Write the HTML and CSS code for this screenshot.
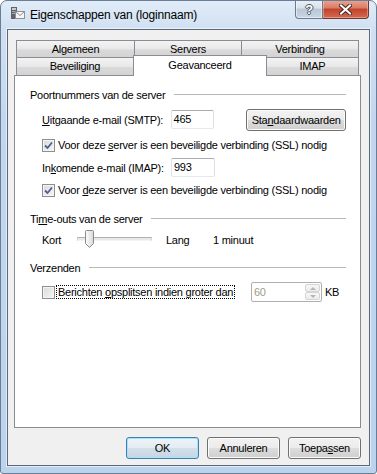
FILE: index.html
```html
<!DOCTYPE html>
<html lang="nl">
<head>
    <meta charset="UTF-8">
    <title>Eigenschappen van (loginnaam)</title>
    <link rel="stylesheet" href="styles.css">
</head>
<body>
    <div class="window">
        <!-- Title bar -->
        <div class="titlebar">
            <svg class="app-icon" width="16" height="14" viewBox="0 0 16 14">
                <rect x="1" y="1" width="6" height="12" fill="#5e6369"/>
                <rect x="2" y="2" width="4" height="2" fill="#c7cbd0"/>
                <rect x="2" y="5" width="4" height="1" fill="#a9aeb4"/>
                <rect x="2" y="7" width="4" height="1" fill="#a9aeb4"/>
                <rect x="5.5" y="5.5" width="9" height="7" fill="#f6f6f6" stroke="#8c9198"/>
                <path d="M6 6 L10 9.5 L14 6" fill="none" stroke="#8c9198"/>
            </svg>
            <span class="title">Eigenschappen van (loginnaam)</span>
            <div class="caption-buttons">
                <div class="cap-help">?</div>
                <div class="cap-close">
                    <svg width="13" height="11" viewBox="0 0 13 11">
                        <path d="M2 1.5 L11 9.5 M11 1.5 L2 9.5" stroke="#4a2a24" stroke-width="4" stroke-linecap="square"/>
                        <path d="M2 1.5 L11 9.5 M11 1.5 L2 9.5" stroke="#fff" stroke-width="2" stroke-linecap="square"/>
                    </svg>
                </div>
            </div>
        </div>

        <div class="client">
            <!-- Tabs -->
            <div class="tabs">
                <div class="tab-row row-back">
                    <div class="tab tab-algemeen">Algemeen</div>
                    <div class="tab tab-servers">Servers</div>
                    <div class="tab tab-verbinding">Verbinding</div>
                </div>
                <div class="tab-row row-front">
                    <div class="tab tab-beveiliging">Beveiliging</div>
                    <div class="tab tab-selected">Geavanceerd</div>
                    <div class="tab tab-imap">IMAP</div>
                </div>
            </div>

            <!-- Tab page -->
            <div class="panel">
                <div class="group-head">Poortnummers van de server</div>

                <div class="row smtp-row">
                    <span class="field-label"><u>U</u>itgaande e-mail (SMTP):</span>
                    <div class="text-input">465</div>
                    <button class="btn btn-std">Sta<u>n</u>daardwaarden</button>
                </div>
                <div class="row check-row first-check">
                    <span class="check checked">
                        <svg width="9" height="9" viewBox="0 0 9 9"><path d="M1 4.5 L3.5 7 L8 1.5" fill="none" stroke="#4c5f8e" stroke-width="1.8"/></svg>
                    </span>
                    <span>Voor deze <u>s</u>erver is een beveiligde verbinding (SSL) nodig</span>
                </div>

                <div class="row imap-row">
                    <span class="field-label">In<u>k</u>omende e-mail (IMAP):</span>
                    <div class="text-input">993</div>
                </div>
                <div class="row check-row">
                    <span class="check checked">
                        <svg width="9" height="9" viewBox="0 0 9 9"><path d="M1 4.5 L3.5 7 L8 1.5" fill="none" stroke="#4c5f8e" stroke-width="1.8"/></svg>
                    </span>
                    <span>Voor <u>d</u>eze server is een beveiligde verbinding (SSL) nodig</span>
                </div>

                <div class="group-head head-timeouts">Ti<u>m</u>e-outs van de server</div>
                <div class="row slider-row">
                    <span class="kort">Kort</span>
                    <div class="slider">
                        <div class="track"></div>
                        <svg class="thumb" width="9" height="18" viewBox="0 0 9 18">
                            <defs>
                                <linearGradient id="thumbfill" x1="0" x2="1" y1="0" y2="0">
                                    <stop offset="0" stop-color="#fdfdfd"/>
                                    <stop offset="1" stop-color="#d8d8d8"/>
                                </linearGradient>
                            </defs>
                            <path d="M1.5 0.5 H7.5 Q8.5 0.5 8.5 1.5 V13.5 L4.5 17.5 L0.5 13.5 V1.5 Q0.5 0.5 1.5 0.5 Z" fill="url(#thumbfill)" stroke="#8a8a8a"/>
                        </svg>
                    </div>
                    <span class="lang">Lang</span>
                    <span>1 minuut</span>
                </div>

                <div class="group-head head-verzenden">Verzenden</div>
                <div class="row split-row">
                    <div class="split-wrap">
                        <span class="check"></span>
                        <span class="focus-label">Berichten <u>o</u>psplitsen indien groter dan</span>
                    </div>
                    <div class="spin">
                        <span class="spin-value">60</span>
                        <div class="spin-buttons">
                            <div class="spin-btn"><span class="arrow-up"></span></div>
                            <div class="spin-btn"><span class="arrow-down"></span></div>
                        </div>
                    </div>
                    <span class="kb">KB</span>
                </div>
            </div>

            <!-- Dialog buttons -->
            <div class="dialog-buttons">
                <button class="btn btn-default">OK</button>
                <button class="btn">Annuleren</button>
                <button class="btn">Toepa<u>s</u>sen</button>
            </div>
        </div>
    </div>
</body>
</html>
```

FILE: styles.css
```css
* { box-sizing: border-box; }
body {
    margin: 0;
    font-family: "Liberation Sans", Arial, sans-serif;
    font-size: 11px;
    letter-spacing: -0.25px;
    color: #000;
    background: #fff;
}
u { text-decoration: underline; text-underline-offset: 1px; }

/* Aero frame */
.window {
    width: 377px;
    height: 474px;
    display: flex;
    flex-direction: column;
    background: linear-gradient(#e1ecf8, #d0e0f2 29px, #c2d7ee 120px, #bcd3ec);
    border: 1px solid #6a7d96;
    border-radius: 7px 7px 3px 3px;
    overflow: hidden;
}
.titlebar {
    height: 28px;
    display: flex;
    align-items: center;
    flex-shrink: 0;
}
.app-icon {
    align-self: flex-start;
    margin: 5px 0 0 9px;
}
.title {
    margin-left: 4px;
    font-size: 12px;
    letter-spacing: -0.17px;
    color: #000;
}
.caption-buttons {
    display: flex;
    align-self: flex-start;
    margin: -1px 7px 0 auto;
    height: 19px;
}
.cap-help, .cap-close {
    display: flex;
    align-items: center;
    justify-content: center;
    height: 19px;
    border: 1px solid #6b7a8f;
    border-top: none;
}
.cap-help {
    width: 28px;
    border-radius: 0 0 0 4px;
    background: linear-gradient(#e9eff6, #d9e2ec 45%, #b8c6d6 50%, #c9d6e4);
    box-shadow: inset 0 0 0 1px rgba(255,255,255,0.5);
    color: #fff;
    font-weight: bold;
    font-size: 13px;
    text-shadow: 1px 0 0 #4d5561, -1px 0 0 #4d5561, 0 1px 0 #4d5561, 0 -1px 0 #4d5561;
}
.cap-close {
    width: 46px;
    border-left: none;
    border-color: #6d3a33;
    border-radius: 0 0 4px 0;
    background: linear-gradient(#e8a795, #d97b63 45%, #c2412a 50%, #d36a4f);
    box-shadow: inset 0 0 0 1px rgba(255,220,210,0.4);
}

/* Client area */
.client {
    flex: 1;
    margin: 0 6px 7px 6px;
    padding: 0 8px 0 6px;
    background: #f0f0f0;
    border: 1px solid #5c6878;
    box-shadow: 0 0 0 1px rgba(255,255,255,0.55);
    display: flex;
    flex-direction: column;
}

/* Tabs */
.tabs {
    margin: 10px 0 0 2px;
}
.tab-row {
    display: flex;
    align-items: flex-start;
}
.row-back { height: 17px; }
.row-front { height: 18px; }
.tab {
    border: 1px solid #898c95;
    border-bottom: none;
    background: linear-gradient(#f3f3f3, #e8e8e8 50%, #dadada 55%, #d3d3d3);
    text-align: center;
    line-height: 16px;
}
.row-back .tab { height: 17px; }
.row-front .tab { height: 18px; line-height: 17px; }
.tab-algemeen { width: 119px; }
.tab-servers { width: 108px; margin-left: -1px; }
.tab-verbinding { width: 118px; margin-left: -1px; }
.tab-beveiliging { width: 118px; }
.row-front .tab-selected {
    position: relative;
    z-index: 1;
    width: 134px;
    height: 21px;
    margin: -2px 0 0 -1px;
    padding-top: 1px;
    line-height: 16px;
    background: #fff;
}
.tab-imap { width: 93px; margin-left: -1px; }

/* Tab page */
.panel {
    width: 347px;
    height: 353px;
    background: #fff;
    border: 1px solid #898c95;
    padding: 11px 14px 0 15px;
    display: flex;
    flex-direction: column;
    flex-shrink: 0;
}
.group-head {
    display: flex;
    align-items: center;
    height: 16px;
}
.group-head::after {
    content: "";
    flex: 1;
    height: 1px;
    margin: -2px 0 0 9px;
    background: #b7b7b7;
}
.head-timeouts { margin-top: 13px; }
.head-verzenden { margin-top: 10px; }

.row {
    display: flex;
    align-items: center;
    padding-left: 12px;
}
.smtp-row { margin-top: 5px; height: 23px; }
.imap-row { margin-top: 4px; height: 21px; }
.check-row { margin-top: 4px; height: 16px; }
.first-check { margin-top: 6px; }
.slider-row { margin-top: 3px; height: 20px; }
.split-row { margin-top: 5px; height: 22px; }

.field-label { width: 129px; }
.text-input {
    width: 44px;
    height: 19px;
    padding-left: 2px;
    line-height: 17px;
    background: #fff;
    border: 1px solid;
    border-color: #abadb3 #dbdfe6 #e3e9ef #e2e3ea;
    border-radius: 2px;
}

.check {
    width: 13px;
    height: 13px;
    margin-right: 3px;
    display: flex;
    align-items: center;
    justify-content: center;
    flex-shrink: 0;
    border: 1px solid #8e8f8f;
    background: linear-gradient(135deg, #d9d9d9, #f7f7f7);
    box-shadow: inset 0 0 0 1px #f4f4f4;
}

/* Slider */
.kort { width: 35px; }
.slider {
    width: 75px;
    height: 20px;
    position: relative;
    display: flex;
    align-items: flex-start;
}
.track {
    flex: 1;
    height: 4px;
    margin-top: 7px;
    background: #e7eaea;
    border: 1px solid;
    border-color: #b0b0b0 #d6d6d6 #f4f4f4 #d6d6d6;
}
.thumb {
    position: absolute;
    left: 8px;
    top: 0;
}
.lang { width: 47px; margin-left: 14px; }

/* Split messages */
.split-wrap {
    width: 209px;
    display: flex;
    align-items: center;
}
.split-wrap .check { margin-right: 1px; }
.focus-label {
    border: 1px dotted #000;
    padding: 0 1px;
    line-height: 12px;
}
.spin {
    width: 71px;
    height: 20px;
    display: flex;
    background: #fff;
    border: 1px solid #afafaf;
    border-radius: 2px;
}
.spin-value {
    flex: 1;
    padding-left: 2px;
    line-height: 18px;
    color: #a39a8c;
}
.spin-buttons {
    width: 15px;
    margin: 1px 1px 1px 0;
    display: flex;
    flex-direction: column;
}
.spin-btn {
    flex: 1;
    display: flex;
    align-items: center;
    justify-content: center;
    border: 1px solid #d5d5d5;
    border-radius: 2px;
    background: linear-gradient(#f7f7f7, #ececec);
}
.arrow-up, .arrow-down {
    width: 0;
    height: 0;
    border-left: 3px solid transparent;
    border-right: 3px solid transparent;
}
.arrow-up { border-bottom: 3px solid #b5b5b5; }
.arrow-down { border-top: 3px solid #b5b5b5; }
.kb { margin-left: 3px; }

/* Buttons */
.btn {
    font: inherit;
    letter-spacing: inherit;
    color: #000;
    padding: 0;
    border: 1px solid #707070;
    border-radius: 3px;
    background: linear-gradient(#f2f2f2, #ebebeb 50%, #dddddd 50%, #cfcfcf);
    box-shadow: inset 0 0 0 1px #fbfbfb;
}
.btn-std { width: 100px; height: 22px; margin-left: 32px; }
.dialog-buttons {
    display: flex;
    justify-content: flex-end;
    gap: 8px;
    margin-top: 9px;
}
.dialog-buttons .btn { width: 73px; height: 22px; }
.dialog-buttons .btn-default {
    border-color: #3c7fb1;
    box-shadow: inset 0 0 0 1px #a8e2f8;
    background: linear-gradient(#eef4f8, #e3ecf2 50%, #d3e0ea 50%, #c7d6e2);
}
```
